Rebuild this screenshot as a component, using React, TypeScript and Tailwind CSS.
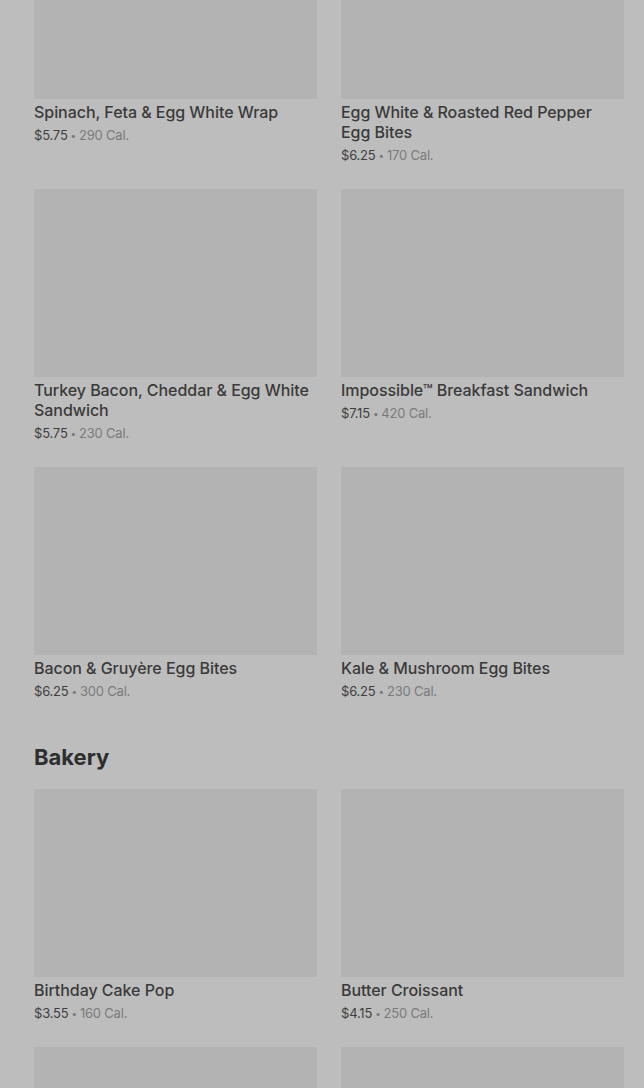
import React from 'react';

interface menu_item {
  name: string,
  price: string,
  cal: string,
}

const breakfast: menu_item[] = [
  { name: 'Spinach, Feta & Egg White Wrap', price: '$5.75', cal: '290 Cal.' },
  { name: 'Egg White & Roasted Red Pepper Egg Bites', price: '$6.25', cal: '170 Cal.' },
  { name: 'Turkey Bacon, Cheddar & Egg White Sandwich', price: '$5.75', cal: '230 Cal.' },
  { name: 'Impossible™ Breakfast Sandwich', price: '$7.15', cal: '420 Cal.' },
  { name: 'Bacon & Gruyère Egg Bites', price: '$6.25', cal: '300 Cal.' },
  { name: 'Kale & Mushroom Egg Bites', price: '$6.25', cal: '230 Cal.' },
];

const bakery: menu_item[] = [
  { name: 'Birthday Cake Pop', price: '$3.55', cal: '160 Cal.' },
  { name: 'Butter Croissant', price: '$4.15', cal: '250 Cal.' },
];

const Card: React.FC<{ item: menu_item }> = ({ item }) => (
  <div className="flex flex-col">
    <div className="h-[188px] w-full bg-[#b3b3b3]"></div>
    <p className="mt-[3px] text-[16px] leading-[20px] font-medium text-[#3a3a3a] tracking-[-0.05px]">{item.name}</p>
    <p className="mt-[3px] h-[20px] text-[13px] leading-[20px] text-[#3f3f3f] tracking-[-0.2px]">
      {item.price}
      <span className="text-[#7b7b7b]">
        <span className="relative -top-[1px] mx-[3px] text-[10px] leading-none">•</span>
        {item.cal}
      </span>
    </p>
  </div>
);

export default function App() {
  return (
    <div className="h-[1088px] w-[644px] overflow-hidden bg-[#bdbdbd]" style={{ fontFamily: 'Inter, "Noto Sans", sans-serif' }}>
      <div className="-mt-[89px] pl-[34px] pr-[20px]">
        <div className="grid grid-cols-2 gap-x-[24px] gap-y-[24px]">
          {breakfast.map((item) => <Card key={item.name} item={item} />)}
        </div>
        <h2 className="mt-[42px] mb-[18px] text-[22px] leading-[28px] font-bold text-[#2e2e2e]">Bakery</h2>
        <div className="grid grid-cols-2 gap-x-[24px] gap-y-[24px]">
          {bakery.map((item) => <Card key={item.name} item={item} />)}
          <div className="h-[188px] bg-[#b3b3b3]"></div>
          <div className="h-[188px] bg-[#b3b3b3]"></div>
        </div>
      </div>
    </div>
  );
}
